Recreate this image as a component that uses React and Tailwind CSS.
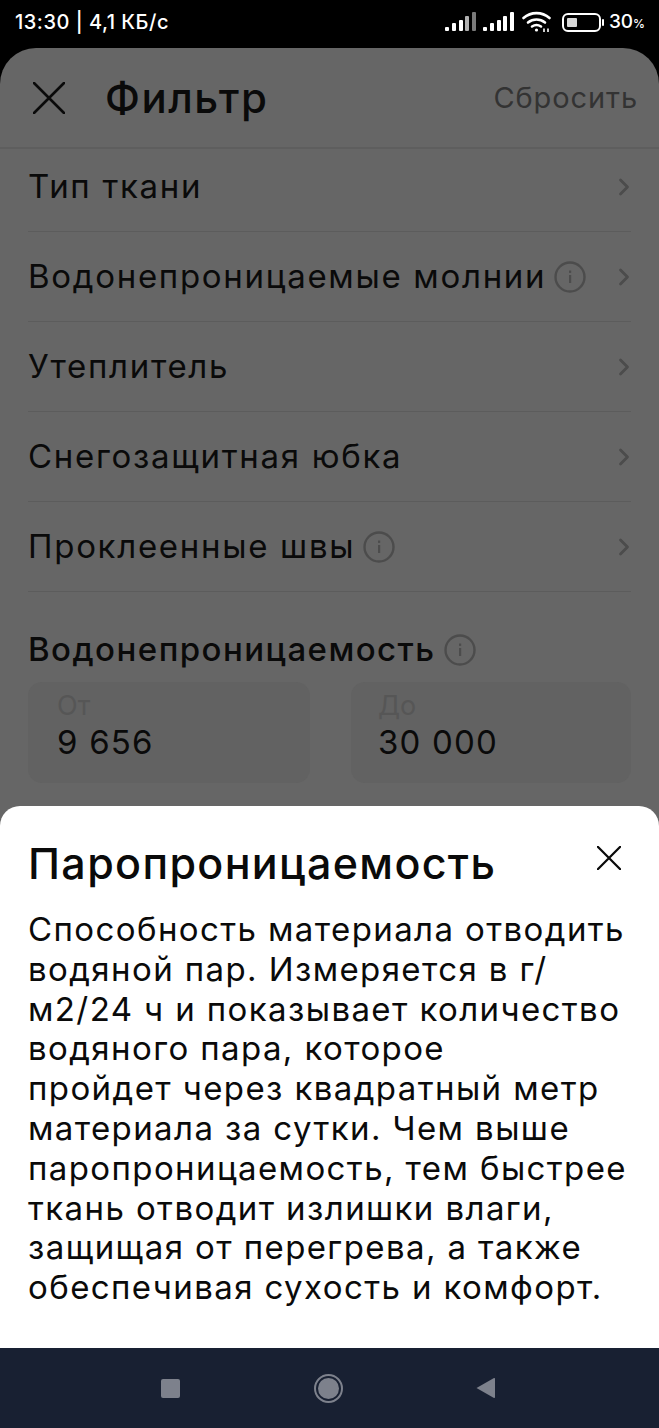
import React from 'react';
import { ChevronRight } from 'lucide-react';

const rows = [
    { label: 'Тип ткани', height: 'h-[83px] pb-[7px]' },
    { label: 'Водонепроницаемые молнии', info: true, height: 'h-[90px]' },
    { label: 'Утеплитель', height: 'h-[90px]' },
    { label: 'Снегозащитная юбка', height: 'h-[90px]' },
    { label: 'Проклеенные швы', info: true, height: 'h-[90px]' },
];

const bodyLines = [
    'Способность материала отводить',
    'водяной пар. Измеряется в г/',
    'м2/24 ч и показывает количество',
    'водяного пара, которое',
    'пройдет через квадратный метр',
    'материала за сутки. Чем выше',
    'паропроницаемость, тем быстрее',
    'ткань отводит излишки влаги,',
    'защищая от перегрева, а также',
    'обеспечивая сухость и комфорт.',
];

const CloseIcon = ({ size, stroke }) => (
    <svg width={size} height={size} viewBox="0 0 32 32" fill="none" className="shrink-0">
        <path d="M1 1 L31 31 M31 1 L1 31" stroke="#0a0a0a" strokeWidth={stroke} strokeLinecap="round" />
    </svg>
);

const InfoIcon = () => (
    <svg width="32" height="32" viewBox="0 0 32 32" fill="none" className="shrink-0">
        <circle cx="16" cy="16" r="14.5" stroke="#4c4c4c" strokeWidth="2.4" />
        <rect x="15" y="14" width="2.2" height="8" fill="#4c4c4c" />
        <rect x="15" y="9.5" width="2.2" height="2.4" fill="#4c4c4c" />
    </svg>
);

const SignalIcon = ({ dim }) => (
    <svg width="31" height="20" viewBox="0 0 31 20">
        <rect x="0" y="15" width="4" height="4" rx="1" fill="#fff" />
        <rect x="7" y="11" width="4" height="8" rx="1" fill="#fff" />
        <rect x="14" y="8" width="4" height="11" rx="1" fill="#fff" />
        <rect x="20" y="4" width="4" height="15" rx="1" fill={dim ? '#b0b0b0' : '#fff'} />
        <rect x="27" y="0" width="4" height="19" rx="1" fill={dim ? '#7a7a7a' : '#fff'} />
    </svg>
);

const WifiIcon = () => (
    <svg width="30" height="22" viewBox="0 0 30 22" fill="none" stroke="#fff" strokeWidth="2.6" strokeLinecap="round">
        <path d="M1.5 7 C9 0.5 20 0.5 27.5 7" />
        <path d="M6 11.5 C11 7.5 18 7.5 23 11.5" />
        <path d="M10 15.5 C13 13.5 16 13.5 19 15.5" />
        <circle cx="14.5" cy="19" r="1.6" fill="#fff" stroke="none" />
        <path d="M22 17.5 V21 M26 17.5 V21" strokeWidth="1.6" strokeLinecap="butt" />
    </svg>
);

const BatteryIcon = () => (
    <svg width="42" height="19" viewBox="0 0 42 19" fill="none">
        <rect x="1" y="1" width="37" height="17" rx="5" stroke="#fff" strokeWidth="2" />
        <rect x="5" y="5" width="10" height="9" rx="1" fill="#d8d8d8" />
        <rect x="40" y="6" width="2" height="7" rx="1" fill="#fff" />
    </svg>
);

const RangeField = ({ label, value, className }) => (
    <div className={`h-[101px] rounded-[14px] bg-[#626262] pt-[8px] ${className}`}>
        <p className="text-[27px] leading-[32px] text-[#565656]">{label}</p>
        <p className="pt-[1px] text-[33px] leading-[38px] tracking-[1.2px] text-[#0a0a0a]">{value}</p>
    </div>
);

const App = () => {
    return (
        <div className="relative flex h-[1428px] w-[659px] flex-col overflow-hidden bg-black font-['Inter',sans-serif]">
            {/* status bar */}
            <div className="flex h-[48px] shrink-0 items-center justify-between pl-[15px] pr-[14px] pb-[4px] text-white">
                <span className="text-[20px] font-medium tracking-[0.5px]">13:30 | 4,1 КБ/с</span>
                <div className="flex items-center">
                    <SignalIcon dim />
                    <div className="ml-[7px]"><SignalIcon /></div>
                    <div className="ml-[8px]"><WifiIcon /></div>
                    <div className="ml-[10px]"><BatteryIcon /></div>
                    <span className="ml-[5px] text-[19px] font-medium">30<span className="text-[12px]">%</span></span>
                </div>
            </div>

            {/* filter screen, dimmed */}
            <div className="flex-1 overflow-hidden rounded-t-[36px] bg-[#666666]">
                <div className="flex h-[101px] items-center border-b-2 border-[#5e5e5e] pl-[33px] pr-[21px]">
                    <CloseIcon size={32} stroke={2.6} />
                    <h1 className="ml-[40px] flex-1 text-[42px] font-medium tracking-[1.5px] text-[#0a0a0a]">Фильтр</h1>
                    <button className="text-[29px] tracking-[0.9px] text-[#333333]">Сбросить</button>
                </div>

                <div className="px-[28px]">
                    {rows.map((row) => (
                        <div key={row.label} className={`flex items-center border-b border-[#5c5c5c] ${row.height}`}>
                            <span className="text-[33px] tracking-[1.7px] text-[#0a0a0a]">{row.label}</span>
                            {row.info && <span className="ml-[8px]"><InfoIcon /></span>}
                            <ChevronRight size={28} strokeWidth={2.4} className="ml-auto -mr-[7px] text-[#4c4c4c]" />
                        </div>
                    ))}

                    <div className="mt-[33px] flex items-center gap-[8px]">
                        <h2 className="text-[33px] font-medium tracking-[1.45px] text-[#0a0a0a]">Водонепроницаемость</h2>
                        <InfoIcon />
                    </div>

                    <div className="mt-[7px] flex gap-[41px]">
                        <RangeField label="От" value="9 656" className="w-[282px] pl-[29px]" />
                        <RangeField label="До" value="30 000" className="flex-1 pl-[27px]" />
                    </div>
                </div>
            </div>

            {/* info sheet over the filter */}
            <div className="absolute inset-x-0 bottom-[80px] h-[542px] rounded-t-[20px] bg-white pl-[28px] pr-[33px] pt-[29px]">
                <div className="flex items-start justify-between">
                    <h2 className="text-[43px] leading-[56px] font-medium tracking-[1.35px] text-[#0a0a0a]">Паропроницаемость</h2>
                    <div className="mt-[11px] mr-[5px]"><CloseIcon size={24} stroke={3} /></div>
                </div>
                <div className="mt-[19px] text-[33px] leading-[39.8px] tracking-[1.4px] text-[#0a0a0a]">
                    {bodyLines.map((line) => (
                        <div key={line} className="whitespace-nowrap">{line}</div>
                    ))}
                </div>
            </div>

            {/* android nav */}
            <div className="z-10 flex h-[80px] shrink-0 items-center justify-between bg-[#182032] pl-[161px] pr-[163px]">
                <div className="h-[19px] w-[19px] rounded-[2px] bg-[#7d818c]" />
                <div className="flex h-[29px] w-[29px] items-center justify-center rounded-full border-2 border-[#7d818c]">
                    <div className="h-[21px] w-[21px] rounded-full bg-[#7d818c]" />
                </div>
                <svg width="20" height="22" viewBox="0 0 20 22">
                    <path d="M0.5 11 L18 1 Q19 0.6 19 2 V20 Q19 21.4 18 21 Z" fill="#7d818c" />
                </svg>
            </div>
        </div>
    );
};

export default App;
